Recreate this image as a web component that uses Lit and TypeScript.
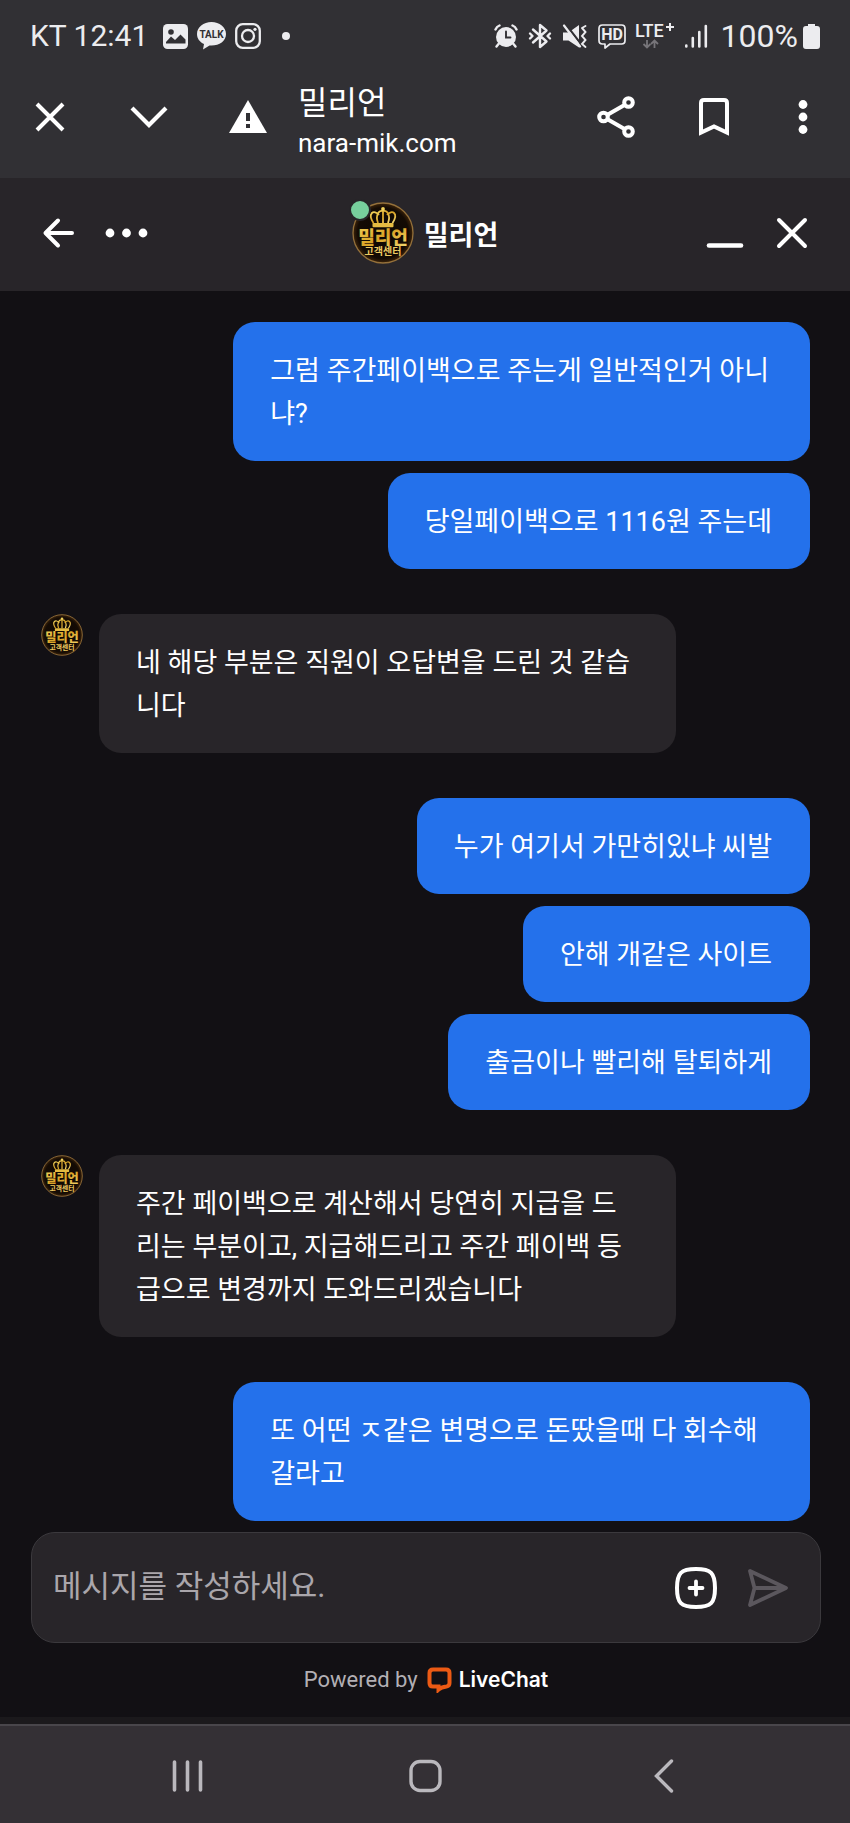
import { LitElement, html, css, nothing } from "lit";
import { customElement, property, state } from "lit/decorators.js";
import { classMap } from "lit/directives/class-map.js";

interface Message {
  from: "me" | "agent";
  lines: string[];
}

const THREAD: Message[] = [
  { from: "me", lines: ["그럼 주간페이백으로 주는게 일반적인거 아니냐?", "당일페이백으로 1116원 주는데"] },
  { from: "agent", lines: ["네 해당 부분은 직원이 오답변을 드린 것 같습니다"] },
  { from: "me", lines: ["누가 여기서 가만히있냐 씨발", "안해 개같은 사이트", "출금이나 빨리해 탈퇴하게"] },
  {
    from: "agent",
    lines: ["주간 페이백으로 계산해서 당연히 지급을 드리는 부분이고, 지급해드리고 주간 페이백 등급으로 변경까지 도와드리겠습니다"],
  },
  { from: "me", lines: ["또 어떤 ㅈ같은 변명으로 돈땄을때 다 회수해갈라고"] },
];

const base = css`
  * {
    box-sizing: border-box;
  }
  svg {
    display: block;
    flex: none;
  }
  button {
    display: grid;
    place-items: center;
    flex: none;
    margin: 0;
    padding: 0;
    border: 0;
    background: none;
    color: inherit;
    font: inherit;
  }
`;

/* Round gold crown badge of the support team */
@customElement("brand-avatar")
export class BrandAvatar extends LitElement {
  @property({ type: Boolean }) online = false;

  static styles = [
    base,
    css`
      :host {
        display: block;
        position: relative;
        flex: none;
        width: 42px;
        height: 42px;
      }
      .badge {
        width: 100%;
        height: 100%;
      }
      .name {
        font: 900 18px "Noto Sans CJK KR", sans-serif;
      }
      .team {
        font: 700 10px "Noto Sans CJK KR", sans-serif;
      }
      .dot {
        position: absolute;
        top: -3px;
        left: -3px;
        width: 22px;
        height: 22px;
        border: 2px solid #272529;
        border-radius: 50%;
        background: #77cf9d;
      }
    `,
  ];

  render() {
    return html`
      <svg class="badge" viewBox="0 0 62 62" role="img" aria-label="밀리언 고객센터">
        <defs>
          <linearGradient id="gold" x1="0" y1="0" x2="1" y2="1">
            <stop offset="0" stop-color="#f3d35c" />
            <stop offset=".5" stop-color="#d9a326" />
            <stop offset="1" stop-color="#f6dc78" />
          </linearGradient>
          <radialGradient id="disc">
            <stop offset="0" stop-color="#0d0703" />
            <stop offset=".85" stop-color="#140b04" />
            <stop offset="1" stop-color="#3d240a" />
          </radialGradient>
        </defs>
        <circle cx="31" cy="31" r="30" fill="url(#disc)" stroke="#94703a" stroke-width="1.300" />
        <g fill="none" stroke="url(#gold)" stroke-width="1.800" stroke-linejoin="round">
          <path d="M21.500 21C15 11 22 7 27 13M40.500 21C47 11 40 7 35 13" />
          <path d="M26 21C23 13 27 8 31 9C35 8 39 13 36 21M31 9V21" />
        </g>
        <circle cx="31" cy="7" r="1.900" fill="#f3d35c" />
        <rect x="20.500" y="21" width="21" height="4.200" rx="1" fill="#e4bb42" />
        <text class="name" x="31" y="42" text-anchor="middle" fill="url(#gold)">밀리언</text>
        <text class="team" x="31" y="53" text-anchor="middle" fill="#eecb62">고객센터</text>
      </svg>
      ${this.online ? html`<span class="dot"></span>` : nothing}
    `;
  }
}

@customElement("status-bar")
export class StatusBar extends LitElement {
  static styles = [
    base,
    css`
      :host {
        display: flex;
        justify-content: space-between;
        align-items: center;
        height: 72px;
        padding: 0 30px;
        color: #ececef;
        font-size: 30px;
        line-height: 36px;
      }
      .side {
        display: flex;
        align-items: center;
        gap: 9px;
      }
      .clock {
        margin-right: 6px;
      }
      .dot {
        margin-left: 12px;
      }
      .battery {
        display: flex;
        align-items: center;
        gap: 5px;
        margin-left: 4px;
        font-size: 32px;
      }
      .icons {
        display: flex;
        align-items: center;
        gap: 10px;
      }
      .talk {
        font: 700 10px Roboto, sans-serif;
      }
      .hd {
        font: 700 16px Roboto, sans-serif;
      }
      .lte {
        font: 500 18px Roboto, sans-serif;
      }
    `,
  ];

  render() {
    return html`
      <div class="side">
        <span class="clock">KT 12:41</span>
        <svg width="25" height="25" viewBox="0 0 25 25">
          <rect width="25" height="25" rx="4.500" fill="#ececef" />
          <circle cx="8" cy="8" r="2.800" fill="#313034" />
          <path d="M3 19.500V18L8 12.500L12 16L17.500 10.500L22.500 15.500V19.500Z" fill="#313034" />
        </svg>
        <svg width="29" height="28" viewBox="0 0 29 28">
          <path d="M14.500 0C22.500 0 29 5 29 12S22.500 23.500 14.500 23.500L12.500 23.400L6 27.500L7 22C2.600 20 0 16.400 0 12C0 5 6.500 0 14.500 0Z" fill="#ececef" />
          <text class="talk" x="14.500" y="16" text-anchor="middle" fill="#313034">TALK</text>
        </svg>
        <svg width="26" height="26" viewBox="0 0 26 26" fill="none" stroke="#ececef" stroke-width="2.300">
          <rect x="1.200" y="1.200" width="23.600" height="23.600" rx="6.500" />
          <circle cx="13" cy="13" r="6" />
          <circle cx="20" cy="6.300" r="1.600" fill="#ececef" stroke="none" />
        </svg>
        <svg class="dot" width="8" height="8" viewBox="0 0 8 8"><circle cx="4" cy="4" r="4" fill="#ececef" /></svg>
      </div>
      <div class="side">
        <div class="icons">
          <svg width="24" height="24" viewBox="0 0 24 24" fill="none" stroke="#ececef" stroke-linecap="round">
            <circle cx="12" cy="13" r="10" fill="#ececef" stroke="none" />
            <path d="M1.500 5.500C2.300 3.600 3.600 2.300 5.500 1.500M22.500 5.500C21.700 3.600 20.400 2.300 18.500 1.500M4.500 20L2.500 22.500M19.500 20L21.500 22.500" stroke-width="2.400" />
            <path d="M12 7.500V13.500H16.500" stroke="#313034" stroke-width="1.900" />
          </svg>
          <svg width="24" height="26" viewBox="0 0 24 26" fill="none" stroke="#ececef" stroke-width="2.400" stroke-linejoin="round" stroke-linecap="round">
            <path d="M5 6.500L18.500 18.500L12 24V2L18.500 7.500L5 19.500M2 10.500L4.500 13L2 15.500M22 10.500L19.500 13L22 15.500" />
          </svg>
          <svg width="26" height="25" viewBox="0 0 26 25" fill="none" stroke="#ececef" stroke-width="2.200" stroke-linecap="round">
            <path d="M1 8.500H6.500L17 1V23.500L6.500 16.500H1Z" fill="#ececef" stroke="none" />
            <path d="M3.500 0L20.500 22" stroke="#313034" stroke-width="2.200" />
            <path d="M2 1.500L18 22.500" />
            <path d="M20 4L23.500 2M20 4L23.500 8L20 12L23.500 16L20 20L23.500 23" stroke-width="1.900" />
          </svg>
          <svg width="28" height="25" viewBox="0 0 28 25" fill="none" stroke="#ececef" stroke-width="1.700" stroke-linejoin="round">
            <path d="M4.500 1H23.500Q27 1 27 4.500V16.500Q27 20 23.500 20H12L7 24V20H4.500Q1 20 1 16.500V4.500Q1 1 4.500 1Z" />
            <text class="hd" x="14" y="16.300" text-anchor="middle" fill="#ececef" stroke="none">HD</text>
          </svg>
        </div>
        <svg width="40" height="34" viewBox="0 0 40 34">
          <text class="lte" x="0" y="18" fill="#ececef">LTE</text>
          <path d="M35 4V12M31 8H39" stroke="#ececef" stroke-width="2" />
          <path d="M12 21V28M8.500 25L12 28.500L15.500 25M19.500 29V22M16 25L19.500 21.500L23 25" fill="none" stroke="#77757a" stroke-width="1.800" />
        </svg>
        <svg width="24" height="24" viewBox="0 0 24 24" stroke="#ececef" stroke-width="2.600" stroke-linecap="round">
          <path d="M2.300 21.500V22.500M8.800 14V22.500M15.300 8V22.500M21.800 2V22.500" />
        </svg>
        <div class="battery">
          <span>100%</span>
          <svg width="17" height="25" viewBox="0 0 17 25">
            <path d="M5 2V0H12V2H14Q17 2 17 5V22Q17 25 14 25H3Q0 25 0 22V5Q0 2 3 2Z" fill="#ececef" />
          </svg>
        </div>
      </div>
    `;
  }
}

@customElement("browser-bar")
export class BrowserBar extends LitElement {
  static styles = [
    base,
    css`
      :host {
        display: flex;
        align-items: center;
        height: 106px;
        padding: 0 31px 16px 25px;
        color: #fff;
      }
      button {
        width: 50px;
        height: 50px;
      }
      .tools {
        display: flex;
        gap: 49px;
      }
      .page {
        flex: 1;
        min-width: 0;
        margin-left: 25px;
        padding-top: 10px;
      }
      .title {
        font-size: 32px;
        line-height: 42px;
      }
      .address {
        font-size: 26px;
        line-height: 38px;
      }
      .actions {
        display: flex;
        gap: 48px;
      }
      .actions .more {
        width: 32px;
      }
    `,
  ];

  render() {
    return html`
      <div class="tools">
        <button aria-label="닫기">
          <svg width="30" height="30" viewBox="0 0 30 30" stroke="#fff" stroke-width="4"><path d="M2 2L28 28M28 2L2 28" /></svg>
        </button>
        <button aria-label="최소화">
          <svg width="38" height="24" viewBox="0 0 38 24" fill="none" stroke="#fff" stroke-width="4.200"><path d="M2 3L19 20L36 3" /></svg>
        </button>
        <button aria-label="사이트 정보">
          <svg width="38" height="34" viewBox="0 0 38 34">
            <path d="M19 0L38 33H0Z" fill="#fff" />
            <path d="M19 13V21M19 24V28" stroke="#313034" stroke-width="4" />
          </svg>
        </button>
      </div>
      <div class="page">
        <div class="title">밀리언</div>
        <div class="address">nara-mik.com</div>
      </div>
      <div class="actions">
        <button aria-label="공유">
          <svg width="38" height="42" viewBox="0 0 38 42" fill="none" stroke="#fff" stroke-width="4">
            <circle cx="6.500" cy="21" r="4.300" /><circle cx="31.500" cy="6.500" r="4.300" /><circle cx="31.500" cy="35.500" r="4.300" />
            <path d="M10.500 18.700L27.500 9M10.500 23.300L27.500 33" />
          </svg>
        </button>
        <button aria-label="북마크">
          <svg width="30" height="38" viewBox="0 0 30 38" fill="none" stroke="#fff" stroke-width="4">
            <path d="M2 34.500V5Q2 2 5 2H25Q28 2 28 5V34.500L15 28.500Z" />
          </svg>
        </button>
        <button class="more" aria-label="더보기">
          <svg width="10" height="36" viewBox="0 0 10 36" fill="#fff">
            <circle cx="5" cy="5.500" r="4.400" /><circle cx="5" cy="18" r="4.400" /><circle cx="5" cy="30.500" r="4.400" />
          </svg>
        </button>
      </div>
    `;
  }
}

@customElement("chat-header")
export class ChatHeader extends LitElement {
  static styles = [
    base,
    css`
      :host {
        display: grid;
        grid-template-columns: 1fr auto 1fr;
        align-items: center;
        height: 113px;
        padding: 0 41px 3px;
        background: #282529;
        color: #fff;
      }
      .group {
        display: flex;
        align-items: center;
        gap: 28px;
      }
      .end {
        justify-content: flex-end;
        gap: 31px;
      }
      .who {
        display: flex;
        align-items: center;
        gap: 10px;
        margin: 0;
        font-size: 27px;
        font-weight: 700;
        line-height: 40px;
      }
      .name {
        padding-top: 5px;
      }
      brand-avatar {
        width: 62px;
        height: 62px;
      }
      button {
        height: 50px;
      }
    `,
  ];

  render() {
    return html`
      <div class="group">
        <button aria-label="뒤로">
          <svg width="36" height="32" viewBox="0 0 36 32" fill="none" stroke="#fff" stroke-width="4" stroke-linecap="round" stroke-linejoin="round">
            <path d="M17 3.500L4.500 16L17 28.500M5 16H31" />
          </svg>
        </button>
        <button aria-label="메뉴">
          <svg width="44" height="12" viewBox="0 0 44 12" fill="#fff">
            <circle cx="5" cy="6" r="4.400" /><circle cx="21.500" cy="6" r="4.400" /><circle cx="38" cy="6" r="4.400" />
          </svg>
        </button>
      </div>
      <h1 class="who"><brand-avatar online></brand-avatar><span class="name">밀리언</span></h1>
      <div class="group end">
        <button aria-label="최소화">
          <svg width="38" height="32" viewBox="0 0 38 32" stroke="#fff" stroke-width="4.600" stroke-linecap="round"><path d="M3 28.500H35" /></svg>
        </button>
        <button aria-label="채팅 닫기">
          <svg width="34" height="34" viewBox="0 0 34 34" stroke="#fff" stroke-width="4" stroke-linecap="round"><path d="M4 4L30 30M30 4L4 30" /></svg>
        </button>
      </div>
    `;
  }
}

@customElement("chat-thread")
export class ChatThread extends LitElement {
  @property({ attribute: false }) messages: Message[] = [];

  static styles = [
    base,
    css`
      :host {
        display: flex;
        flex-direction: column;
        gap: 45px;
        flex: 1;
        padding: 31px 40px 11px 41px;
      }
      .turn {
        display: flex;
        align-items: flex-start;
        gap: 16px;
      }
      .stack {
        display: flex;
        flex-direction: column;
        align-items: flex-start;
        gap: 12px;
        max-width: 75%;
      }
      .mine {
        justify-content: flex-end;
      }
      .mine .stack {
        align-items: flex-end;
      }
      .bubble {
        margin: 0;
        padding: 28px 38px 25px 37px;
        border-radius: 22px;
        background: #282529;
        color: #fff;
        font-size: 27px;
        line-height: 43px;
      }
      .mine .bubble {
        background: #2471eb;
      }
    `,
  ];

  render() {
    return this.messages.map(
      (m) => html`
        <div class=${classMap({ turn: true, mine: m.from === "me" })}>
          ${m.from === "agent" ? html`<brand-avatar></brand-avatar>` : nothing}
          <div class="stack">${m.lines.map((t) => html`<p class="bubble">${t}</p>`)}</div>
        </div>
      `
    );
  }
}

@customElement("chat-composer")
export class ChatComposer extends LitElement {
  @state() private draft = "";

  static styles = [
    base,
    css`
      :host {
        display: block;
        padding: 0 29px 0 31px;
      }
      .box {
        display: flex;
        align-items: center;
        gap: 24px;
        height: 111px;
        padding: 0 31px 0 21px;
        border: 1px solid #3b393d;
        border-radius: 24px;
        background: #282529;
      }
      .field {
        flex: 1;
        min-width: 0;
        height: 60px;
        padding: 0 0 3px;
        border: 0;
        outline: 0;
        background: none;
        color: #fff;
        font-family: inherit;
        font-size: 31px;
      }
      .field::placeholder {
        color: #aaa6ab;
        opacity: 1;
      }
      .send {
        color: #5b575d;
      }
      .brand {
        display: flex;
        justify-content: center;
        align-items: center;
        height: 74px;
        color: #b2afb4;
        font-size: 22px;
        line-height: 28px;
      }
      .brand a {
        display: flex;
        align-items: center;
        gap: 7px;
        margin-left: 9px;
        color: #fff;
        font-family: Inter, sans-serif;
        font-size: 21px;
        font-weight: 600;
        text-decoration: none;
      }
    `,
  ];

  render() {
    return html`
      <form class="box" @submit=${(e: Event) => e.preventDefault()}>
        <input
          class="field"
          type="text"
          aria-label="메시지"
          placeholder="메시지를 작성하세요."
          .value=${this.draft}
          @input=${(e: Event) => (this.draft = (e.target as HTMLInputElement).value)}
        />
        <button type="button" aria-label="첨부">
          <svg width="50" height="44" viewBox="0 0 50 44" fill="none" stroke="#fff" stroke-linecap="round">
            <path d="M25 3C40 3 44 7 44 22S40 41 25 41S6 37 6 22S10 3 25 3Z" stroke-width="4" />
            <path d="M25 15.500V28.500M18.500 22H31.500" stroke-width="3.800" />
          </svg>
        </button>
        <button class="send" aria-label="보내기">
          <svg width="44" height="40" viewBox="0 0 44 40" fill="none" stroke="currentColor" stroke-width="3.800" stroke-linejoin="round">
            <path d="M5 3L41 20L5 37L9.500 20ZM9.500 20H40" />
          </svg>
        </button>
      </form>
      <div class="brand">
        Powered by
        <a href="#">
          <svg width="25" height="26" viewBox="0 0 25 26" fill="none" stroke="#ec5a14" stroke-width="4">
            <path d="M6 2.500H19Q22.500 2.500 22.500 6V16Q22.500 19 19.500 19.400Q14 20 11.500 22.500V19.500H6Q2.500 19.500 2.500 16V6Q2.500 2.500 6 2.500Z" />
          </svg>
          LiveChat
        </a>
      </div>
    `;
  }
}

@customElement("system-nav")
export class SystemNav extends LitElement {
  static styles = [
    base,
    css`
      :host {
        display: grid;
        grid-template-columns: repeat(3, 1fr);
        align-items: center;
        height: 106px;
        padding: 4px 8% 0;
        border-top: 7px solid #1b191c;
        background: linear-gradient(#49464b 2px, #343035 2px);
        color: #bab8bd;
      }
      button {
        height: 60px;
      }
    `,
  ];

  render() {
    return html`
      <button aria-label="최근 앱">
        <svg width="34" height="36" viewBox="0 0 34 36" stroke="currentColor" stroke-width="3.600" stroke-linecap="round">
          <path d="M4.500 4V32M17.500 4V32M30.500 4V32" />
        </svg>
      </button>
      <button aria-label="홈">
        <svg width="34" height="36" viewBox="0 0 34 36" fill="none" stroke="currentColor" stroke-width="3.400">
          <rect x="3" y="3.500" width="29" height="29" rx="9" />
        </svg>
      </button>
      <button aria-label="뒤로">
        <svg width="24" height="36" viewBox="0 0 24 36" fill="none" stroke="currentColor" stroke-width="3.400" stroke-linecap="round">
          <path d="M20.500 3L5.500 18L20.500 33" />
        </svg>
      </button>
    `;
  }
}

@customElement("app-root")
export class AppRoot extends LitElement {
  static styles = [
    base,
    css`
      :host {
        display: flex;
        flex-direction: column;
        min-height: 100vh;
        background: #121014;
        font-family: Roboto, "Noto Sans CJK KR", sans-serif;
      }
      .top {
        background: #313034;
      }
    `,
  ];

  render() {
    return html`
      <header class="top">
        <status-bar></status-bar>
        <browser-bar></browser-bar>
      </header>
      <chat-header></chat-header>
      <chat-thread .messages=${THREAD}></chat-thread>
      <chat-composer></chat-composer>
      <system-nav></system-nav>
    `;
  }
}
